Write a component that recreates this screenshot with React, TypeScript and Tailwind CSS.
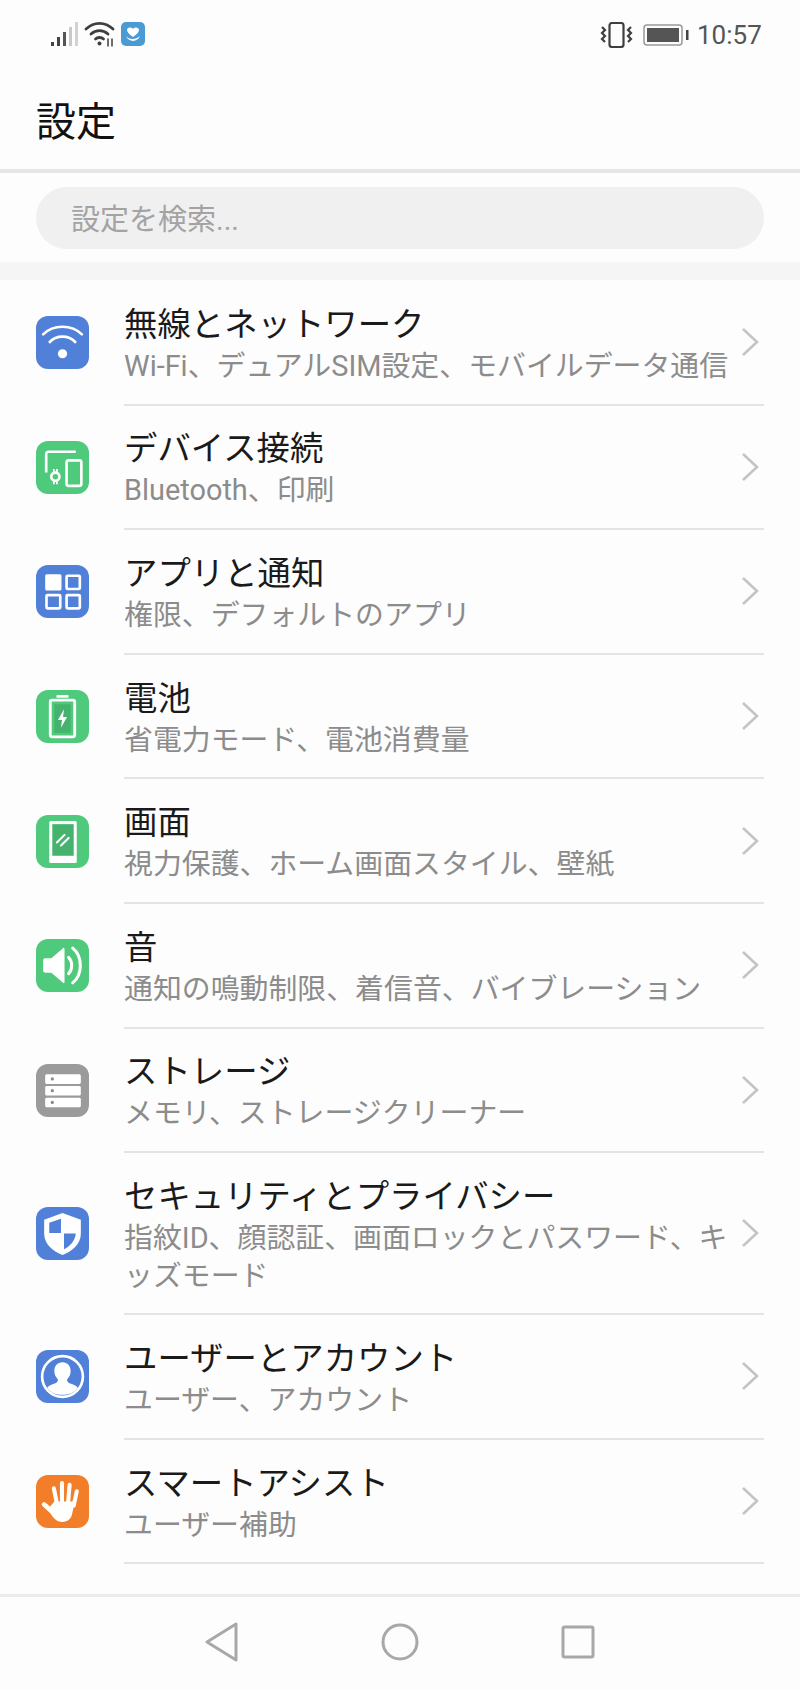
import type { ReactNode } from "react";

const BLUE = "bg-[#5080d8]";
const GREEN = "bg-[#4fc97b]";

function IconBox({ bg, fill, children }: { bg: string; fill?: string; children: ReactNode }) {
  return (
    <div className={`w-[53px] h-[53px] rounded-[12px] shrink-0 -mt-[1px] ${bg}`}>
      <svg width="53" height="53" viewBox="0 0 52 52" fill={fill || "none"} stroke="none">
        {children}
      </svg>
    </div>
  );
}

const WifiIcon = () => (
  <IconBox bg={BLUE}>
    <g stroke="#fff" strokeWidth="2.6" strokeLinecap="round">
      <path d="M7 18C17 8 35 8 45 18" />
      <path d="M13.5 25.5C20 18.500 32 18.500 38.5 25.5" />
    </g>
    <circle cx="26" cy="37" r="4.5" fill="#fff" />
  </IconBox>
);

const DevicesIcon = () => (
  <IconBox bg={GREEN}>
    <g stroke="#fff" strokeWidth="2.6">
      <path d="M10 31V13a2.5 2.5 0 0 1 2.5-2.5H39" />
      <rect x="30" y="19" width="14.5" height="25" rx="2" />
      <circle cx="19" cy="35" r="4" />
      <path d="M17.5 27.5v3M20.5 27.5v3M17.5 39.5v3M20.5 39.5v3" strokeWidth="1.8" />
    </g>
  </IconBox>
);

const AppsIcon = () => (
  <IconBox bg={BLUE}>
    <rect x="9" y="9" width="16" height="16" rx="1.5" fill="#fff" />
    <g stroke="#fff" strokeWidth="2.6">
      <rect x="30" y="10.5" width="13" height="13" rx="1" />
      <rect x="10.3" y="29.5" width="13.5" height="13" rx="1" />
      <rect x="30" y="29.5" width="13" height="13" rx="1" />
    </g>
  </IconBox>
);

const BatteryIcon = () => (
  <IconBox bg={GREEN}>
    <rect x="20" y="5" width="12" height="2.6" rx="1" fill="#fff" />
    <rect x="14" y="10" width="24" height="36" rx="2" stroke="#fff" strokeWidth="2.8" />
    <rect x="18" y="14" width="16" height="28" fill="#45b36d" />
    <path d="M27.5 19L21.5 29.5H25.5L24.5 37L30.5 26.5H26.5Z" fill="#fff" />
  </IconBox>
);

const ScreenIcon = () => (
  <IconBox bg={GREEN}>
    <rect x="13" y="6" width="27" height="41" rx="1.5" fill="#fff" />
    <rect x="16" y="9" width="21" height="31" fill="#45b36d" />
    <g stroke="#fff" strokeWidth="2" strokeLinecap="round">
      <path d="M20.5 27L28 19.5" />
      <path d="M24.5 30L32 22.5" />
    </g>
  </IconBox>
);

const SoundIcon = () => (
  <IconBox bg={GREEN}>
    <path d="M7 21a2 2 0 0 1 2-2h6L26 9.5a1 1 0 0 1 2 .5v32a1 1 0 0 1-2 .5L15 33H9a2 2 0 0 1-2-2Z" fill="#fff" />
    <g stroke="#fff" strokeWidth="3" strokeLinecap="round">
      <path d="M32 18C36 22 36 30 32 34" />
      <path d="M36 9C46 17 46 35 36 43" />
    </g>
  </IconBox>
);

const StorageIcon = () => (
  <IconBox bg="bg-[#9b9b9b]">
    {[10, 21.5, 33].map((y) => (
      <g key={y}>
        <rect x="9" y={y} width="35" height="9.5" rx="1.5" fill="#fff" />
        <circle cx="16" cy={y + 4.7} r="1.6" fill="#8a8a8a" />
      </g>
    ))}
  </IconBox>
);

const ShieldIcon = () => (
  <IconBox bg={BLUE}>
    <path d="M26 6L44 12.5V26C44 37 35 43.5 26 47C17 43.5 8 37 8 26V12.5Z" fill="#fff" />
    <path d="M24.5 11.5L13 15.5V25.5H24.5Z" fill={"#5080d8"} />
    <path d="M27.5 26H39C38.5 33 33.5 38.5 27.5 41.5Z" fill={"#5080d8"} />
  </IconBox>
);

const UserIcon = () => (
  <IconBox bg={BLUE}>
    <circle cx="26" cy="26" r="20" stroke="#fff" strokeWidth="2.6" />
    <path
      d="M26 12c-5 0-8 3.6-8 8.6 0 3.4 1.4 6.2 3.4 8 .4 2-.6 3.2-3 4.2-3 1.200-6 2-7.400 4.200C14.500 42 20 44 26 44s11.500-2 15-7c-1.400-2.200-4.400-3-7.400-4.200-2.400-1-3.400-2.200-3-4.200 2-1.800 3.400-4.600 3.400-8 0-5-3-8.600-8-8.600Z"
      fill="#fff"
    />
  </IconBox>
);

const HandIcon = () => (
  <IconBox bg="bg-[#f27e2a]">
    <g stroke="#fff" strokeLinecap="round" strokeWidth="4">
      <path d="M17.500 13L20.500 28" />
      <path d="M25.500 8V27" />
      <path d="M33 9.500L31.500 27" />
      <path d="M40 16L37 30" />
      <path d="M8 29L17 37" strokeWidth="4.6" />
    </g>
    <path d="M18 26H38L35.500 38C34.500 43 31 46 26 46C20 46 16 42 12 33Z" fill="#fff" />
  </IconBox>
);

const Chevron = () => (
  <svg width="18" height="30" viewBox="0 0 18 30" fill="none" stroke="#c4c4c4" strokeWidth="2.6" className="shrink-0">
    <path d="M2 2L16 15L2 28" />
  </svg>
);

const rows: { title: string; sub: string; icon: ReactNode; tall?: boolean }[] = [
  { title: "無線とネットワーク", sub: "Wi-Fi、デュアルSIM設定、モバイルデータ通信", icon: <WifiIcon /> },
  { title: "デバイス接続", sub: "Bluetooth、印刷", icon: <DevicesIcon /> },
  { title: "アプリと通知", sub: "権限、デフォルトのアプリ", icon: <AppsIcon /> },
  { title: "電池", sub: "省電力モード、電池消費量", icon: <BatteryIcon /> },
  { title: "画面", sub: "視力保護、ホーム画面スタイル、壁紙", icon: <ScreenIcon /> },
  { title: "音", sub: "通知の鳴動制限、着信音、バイブレーション", icon: <SoundIcon /> },
  { title: "ストレージ", sub: "メモリ、ストレージクリーナー", icon: <StorageIcon /> },
  { title: "セキュリティとプライバシー", sub: "指紋ID、顔認証、画面ロックとパスワード、キ\nッズモード", icon: <ShieldIcon />, tall: true },
  { title: "ユーザーとアカウント", sub: "ユーザー、アカウント", icon: <UserIcon /> },
  { title: "スマートアシスト", sub: "ユーザー補助", icon: <HandIcon /> },
];

function StatusLeft() {
  return (
    <div className="flex items-center gap-[6px] pb-[2px]">
      <svg width="28" height="26" viewBox="0 0 28 26">
        <rect x="1" y="21" width="3" height="4" fill="#444" />
        <rect x="7" y="16" width="3" height="9" fill="#444" />
        <rect x="13" y="11" width="3" height="14" fill="#555" />
        <rect x="19" y="6" width="3" height="19" fill="#c9c9c9" />
        <rect x="25" y="1" width="3" height="24" fill="#d2d2d2" />
      </svg>
      <svg width="31" height="26" viewBox="0 0 31 26" fill="none" stroke="#3f3f3f" strokeWidth="2.8" strokeLinecap="round">
        <path d="M2 8C10 0.500 21 0.500 29 8" />
        <path d="M7 13C12 8.500 19 8.500 24 13" />
        <path d="M11.500 18C13.500 16 17.500 16 19.500 18" />
        <circle cx="15.500" cy="22.500" r="2" fill="#3f3f3f" stroke="none" />
        <path d="M24 18v7M28 18v7" strokeWidth="1.500" />
      </svg>
      <svg width="24" height="24" viewBox="0 0 24 24">
        <rect width="24" height="24" rx="5" fill="#4a9bd4" />
        <path d="M12 15C8 12 6 10 6 8C6 5.500 10 4.500 12 7C14 4.500 18 5.500 18 8C18 10 16 12 12 15Z" fill="#fff" />
        <path d="M5 14C8 18 15 18 19 14C17 20 8 21 5 14Z" fill="#fff" />
      </svg>
    </div>
  );
}

function StatusRight() {
  return (
    <div className="flex items-center">
      <svg width="33" height="26" viewBox="0 0 33 26" fill="none" stroke="#3f3f3f" strokeWidth="2.200">
        <rect x="9.500" y="1" width="14" height="24" rx="2.500" strokeWidth="2.200" />
        <path d="M2 5L5 8L2 11L5 14L2 17L5 20" />
        <path d="M31 5L28 8L31 11L28 14L31 17L28 20" />
      </svg>
      <svg width="46" height="22" viewBox="0 0 46 22" className="ml-[10px]">
        <rect x="1" y="1" width="38" height="20" rx="3" fill="none" stroke="#999" strokeWidth="1.500" />
        <rect x="4" y="4" width="32" height="14" fill="#555" />
        <rect x="43" y="6" width="2.500" height="10" fill="#444" />
      </svg>
      <span className="ml-[8px] text-[26px] leading-[30px] text-[#555] font-['Roboto',sans-serif] w-[65px]">10:57</span>
    </div>
  );
}

function NavBar() {
  return (
    <div className="h-[96px] border-t-[3px] border-[#ebebeb] flex items-center justify-center gap-[142px] pb-[4px]">
      <svg width="34" height="40" viewBox="0 0 34 40" fill="none" stroke="#a8a8a8" strokeWidth="3" strokeLinejoin="round">
        <path d="M31 2V38L2 20Z" />
      </svg>
      <svg width="38" height="38" viewBox="0 0 38 38" fill="none" stroke="#a8a8a8" strokeWidth="3">
        <circle cx="19" cy="19" r="17" />
      </svg>
      <svg width="34" height="34" viewBox="0 0 34 34" fill="none" stroke="#a8a8a8" strokeWidth="3">
        <rect x="2" y="2" width="30" height="30" rx="1.500" />
      </svg>
    </div>
  );
}

export default function App() {
  return (
    <div className="w-[800px] h-[1690px] bg-[#fdfdfd] flex flex-col overflow-hidden font-['Roboto','Noto_Sans_CJK_JP',sans-serif]">
      <div className="h-[69px] pl-[50px] pr-[38px] flex items-center justify-between shrink-0">
        <StatusLeft />
        <StatusRight />
      </div>
      <div className="h-[100px] pl-[36px] pt-[8px] flex items-center shrink-0 text-[40px] text-[#111]">設定</div>
      <div className="h-[4px] bg-[#e6e6e6] shrink-0" />
      <div className="h-[89px] px-[36px] pt-[14px] shrink-0">
        <div className="h-[62px] rounded-[31px] bg-[#f0f0f0] pl-[35px] pt-[5px] flex items-center text-[29px] text-[#a3a3a3]">設定を検索...</div>
      </div>
      <div className="h-[18px] bg-[#f5f5f5] shrink-0" />
      <div className="flex-1 pt-[1px]">
        {rows.map((r) => (
          <div key={r.title} className={`flex items-center pl-[36px] ${r.tall ? "h-[162px]" : "h-[124.6px]"}`}>
            <div className="w-[88px] shrink-0">{r.icon}</div>
            <div className="flex-1 h-full mr-[36px] border-b-2 border-[#e4e4e4] flex items-center">
              <div className="flex-1 pt-[3px]">
                <div className="text-[33.4px] leading-[44px] text-[#1a1a1a] whitespace-nowrap">{r.title}</div>
                <div className="text-[28.9px] leading-[38px] text-[#8c8c8c] whitespace-pre">{r.sub}</div>
              </div>
              <div className="mr-[5px]">
                <Chevron />
              </div>
            </div>
          </div>
        ))}
      </div>
      <NavBar />
    </div>
  );
}
